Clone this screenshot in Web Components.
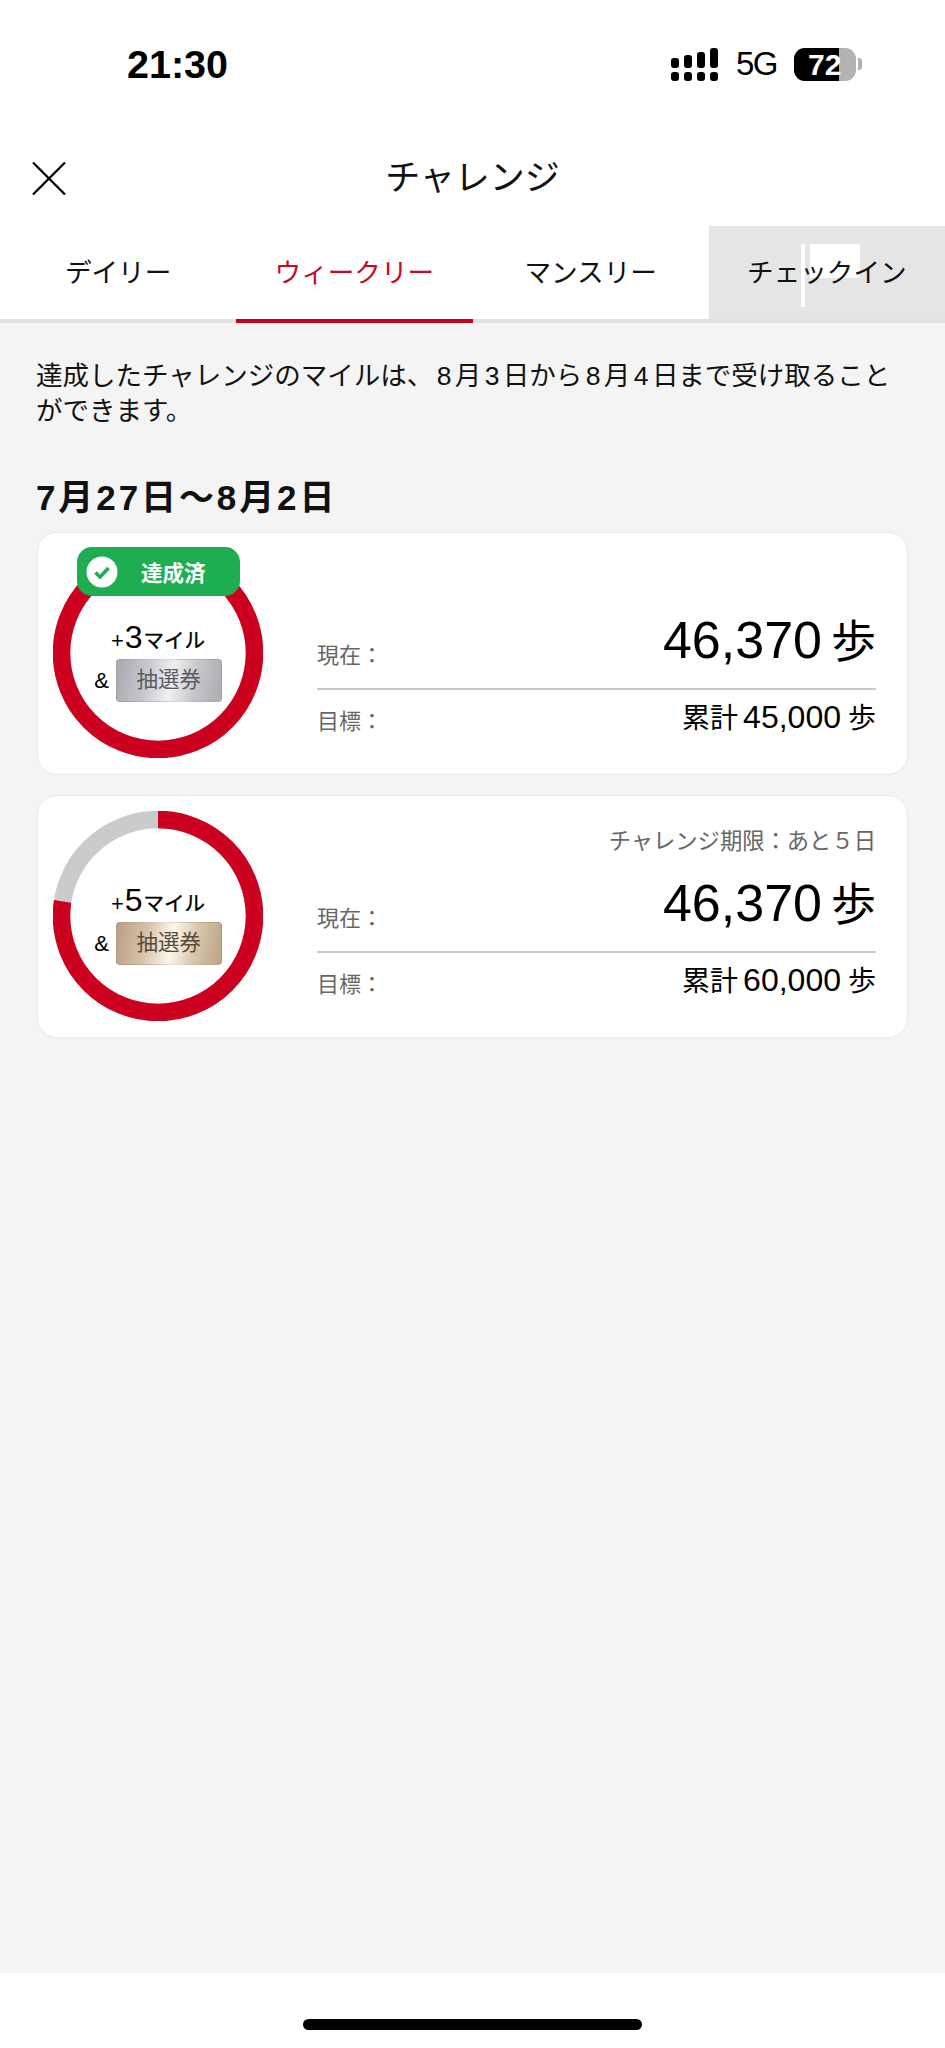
<!DOCTYPE html>
<html lang="ja">
<head>
<meta charset="utf-8">
<title>チャレンジ</title>
<style>
  html, body { margin: 0; padding: 0; background: #fff; }
  body { font-family: "Liberation Sans", "Noto Sans CJK JP", sans-serif; }
</style>
</head>
<body>
<challenge-app></challenge-app>

<script>
// status bar at the top of the phone
class StatusBar extends HTMLElement {
    constructor() {
        super();
        this.shadowDOM = this.attachShadow({mode: 'open'});
    }
    connectedCallback() {
        this.render();
    }
    render() {
        this.shadowDOM.innerHTML = `
            <style>
                :host { display: flex; height: 130px; box-sizing: border-box; padding: 42px 83px 0 127px; justify-content: space-between; align-items: flex-start; color: #000; }
                .time { font: bold 39.5px/44px "Liberation Sans", sans-serif; }
                .right { display: flex; align-items: center; height: 44px; }
                svg { display: block; }
                .net { font: 33px/44px "Liberation Sans", sans-serif; letter-spacing: -1.5px; margin: 0 17px 0 18px; }
                .batt { position: relative; width: 62px; height: 33px; border-radius: 11px; overflow: hidden; background: #b3b3b3; }
                .batt i { position: absolute; left: 0; top: 0; bottom: 0; width: 45px; background: #000; }
                .batt b { position: relative; display: block; font: bold 30px/33px "Liberation Sans", sans-serif; color: #fff; padding-left: 14px; }
                .nub { width: 4px; height: 12px; margin-left: 2px; border-radius: 0 3px 3px 0; background: #b3b3b3; }
            </style>
            <div class="time">21:30</div>
            <div class="right">
                <svg width="47" height="33" viewBox="0 0 47 33" fill="#000">
                    <rect x="0" y="10" width="8" height="10" rx="3"/><rect x="13" y="7" width="8" height="13" rx="3"/><rect x="26" y="4" width="8" height="16" rx="3"/><rect x="39" y="0" width="8" height="20" rx="3"/>
                    <rect x="0" y="24" width="8" height="9" rx="3"/><rect x="13" y="24" width="8" height="9" rx="3"/><rect x="26" y="24" width="8" height="9" rx="3"/><rect x="39" y="24" width="8" height="9" rx="3"/>
                </svg>
                <span class="net">5G</span>
                <div class="batt"><i></i><b>72</b></div>
                <div class="nub"></div>
            </div>`;
    }
}
customElements.define('status-bar', StatusBar);

// close button + title
class TitleBar extends HTMLElement {
    constructor() {
        super();
        this.shadowDOM = this.attachShadow({mode: 'open'});
    }
    connectedCallback() {
        this.render();
    }
    render() {
        this.shadowDOM.innerHTML = `
            <style>
                :host { display: block; position: relative; height: 96px; text-align: center; font: 35px/96px "Liberation Sans", "Noto Sans CJK JP", sans-serif; color: #111; }
                svg { position: absolute; left: 32px; top: 32px; }
            </style>
            <svg width="34" height="33" viewBox="0 0 34 33" fill="none" stroke="#000" stroke-width="2.2"><path d="M1 0.5 33 32.5M33 0.5 1 32.5"/></svg>
            <slot></slot>`;
    }
}
customElements.define('title-bar', TitleBar);

class TabBar extends HTMLElement {
    constructor() {
        super();
        this.shadowDOM = this.attachShadow({mode: 'open'});
    }
    connectedCallback() {
        this.render();
    }
    render() {
        this.shadowDOM.innerHTML = `
            <style>
                :host { display: grid; grid-template-columns: repeat(4, 1fr); height: 97px; background: #fff; }
            </style>
            <slot></slot>`;
    }
}
customElements.define('tab-bar', TabBar);

class TabItem extends HTMLElement {
    constructor() {
        super();
        this.shadowDOM = this.attachShadow({mode: 'open'});
    }
    connectedCallback() {
        this.render();
    }
    render() {
        this.shadowDOM.innerHTML = `
            <style>
                :host { display: block; position: relative; box-sizing: border-box; height: 97px; text-align: center; border-bottom: 4px solid #e2e2e2; font: 26.6px/95px "Liberation Sans", "Noto Sans CJK JP", sans-serif; color: #111; }
                :host([active]) { color: #c40a26; border-bottom-color: #c8001e; }
                :host([shaded]) { background: #e5e5e5; }
                span { position: relative; }
                .glitch { display: none; position: absolute; background: #fff; top: 18px; }
                :host([shaded]) .glitch { display: block; }
                .a { left: 92px; width: 4px; height: 63px; }
                .b { left: 101px; width: 50px; height: 34px; }
            </style>
            <div class="glitch a"></div><div class="glitch b"></div>
            <span><slot></slot></span>`;
    }
}
customElements.define('tab-item', TabItem);

// red progress ring with the reward in the middle
class ProgressRing extends HTMLElement {
    constructor() {
        super();
        this.shadowDOM = this.attachShadow({mode: 'open'});
    }
    connectedCallback() {
        this.render();
    }
    render() {
        const value = Number(this.getAttribute('value'));
        const r = 96.5;
        const c = 2 * Math.PI * r;
        const tier = this.getAttribute('tier');
        const bg = tier === 'gold'
            ? 'linear-gradient(100deg,#b99f84 0%,#d6c2a8 28%,#fbf6ea 52%,#d9c6ac 74%,#bda386 100%)'
            : 'linear-gradient(100deg,#a9a9b3 0%,#c6c6cd 28%,#f0f0f2 52%,#c6c6cc 74%,#abacb4 100%)';
        const ink = tier === 'gold' ? '#5a4a3a' : '#5b5b62';
        this.shadowDOM.innerHTML = `
            <style>
                :host { display: grid; width: 210px; height: 210px; flex: none; color: #000; }
                svg, .mid { grid-area: 1 / 1; }
                svg { display: block; }
                .mid { display: flex; flex-direction: column; align-items: center; padding-top: 72px; box-sizing: border-box; font-family: "Liberation Sans", "Noto Sans CJK JP", sans-serif; }
                .miles { font-size: 20.5px; line-height: 34px; height: 34px; -webkit-text-stroke: 0.35px #000; }
                .miles b { font-weight: 400; font-size: 32px; -webkit-text-stroke: 0; margin-right: 1px; }
                .miles em { font-style: normal; font-size: 22px; -webkit-text-stroke: 0; margin-right: 1px; }
                .line { display: flex; align-items: center; margin-top: 5px; font-size: 22px; }
                .ticket { width: 106px; height: 43px; margin-left: 7px; border-radius: 4px; box-sizing: border-box; border: 1px solid rgba(0,0,0,.08); background: ${bg}; color: ${ink}; font-size: 21.5px; line-height: 41px; text-align: center; }
            </style>
            <svg width="210" height="210" viewBox="0 0 210 210" fill="none" stroke-width="17.5">
                <circle cx="105" cy="105" r="${r}" stroke="#cbcbcb"/>
                <circle cx="105" cy="105" r="${r}" stroke="#cc001f" stroke-dasharray="${c * value} ${c}" transform="rotate(-90 105 105)"/>
            </svg>
            <div class="mid">
                <div class="miles"><em>+</em><b>${this.getAttribute('miles')}</b>マイル</div>
                <div class="line"><span>&amp;</span><div class="ticket">抽選券</div></div>
            </div>`;
    }
}
customElements.define('progress-ring', ProgressRing);

class ChallengeCard extends HTMLElement {
    constructor() {
        super();
        this.shadowDOM = this.attachShadow({mode: 'open'});
    }
    connectedCallback() {
        this.render();
    }
    render() {
        const done = this.hasAttribute('done');
        const note = this.getAttribute('note');
        this.shadowDOM.innerHTML = `
            <style>
                :host { display: flex; position: relative; box-sizing: border-box; height: 243px; padding: 15px 31px 0 15px; background: #fff; border: 1px solid #e9e9e9; border-radius: 20px; font-family: "Liberation Sans", "Noto Sans CJK JP", sans-serif; }
                .badge { position: absolute; left: 39px; top: 14px; display: flex; align-items: center; width: 163px; height: 49px; box-sizing: border-box; padding-left: 9px; background: #1eae51; border-radius: 15px; color: #fff; font-size: 21.5px; font-weight: 700; }
                .badge span { margin-left: 23px; }
                .data { flex: 1; margin-left: 54px; display: flex; flex-direction: column; }
                .note { height: 72px; font-size: 22.3px; line-height: 64px; text-align: right; color: #666; margin-top: -1px; white-space: nowrap; }
                .row { display: flex; justify-content: space-between; }
                .now { height: 71px; box-sizing: border-box; border-bottom: 2px solid #c9c9c9; align-items: flex-start; }
                .goal { margin-top: 7px; }
                .label { font-size: 22px; color: #666; line-height: 30px; }
                .now .label { margin-top: 22px; }
                .goal .label { margin-top: 10px; }
                .big { font-size: 52px; line-height: 60px; color: #000; margin-top: -9px; white-space: nowrap; }
                .big i, .sum i { font-style: normal; }
                .big i { font-size: 45px; margin-left: 9px; }
                .sum { font-size: 32px; line-height: 40px; color: #000; white-space: nowrap; }
                .sum u { text-decoration: none; font-size: 28px; margin-right: 5px; }
                .sum i { font-size: 28px; margin-left: 7px; }
            </style>
            ${done ? `<div class="badge">
                <svg width="32" height="32" viewBox="0 0 32 32"><circle cx="16" cy="16" r="15.5" fill="#fff"/><path d="M9.5 16.5 14 21 22.5 12" fill="none" stroke="#1eae51" stroke-width="3.6"/></svg>
                <span>達成済</span></div>` : ''}
            <progress-ring value="${this.getAttribute('value')}" miles="${this.getAttribute('miles')}" tier="${this.getAttribute('tier')}"></progress-ring>
            <div class="data">
                <div class="note">${note || ''}</div>
                <div class="row now"><div class="label">現在：</div><div class="big">46,370<i>歩</i></div></div>
                <div class="row goal"><div class="label">目標：</div><div class="sum"><u>累計</u>${this.getAttribute('goal')}<i>歩</i></div></div>
            </div>`;
    }
}
customElements.define('challenge-card', ChallengeCard);

class ChallengeApp extends HTMLElement {
    constructor() {
        super();
        this.shadowDOM = this.attachShadow({mode: 'open'});
    }
    connectedCallback() {
        this.render();
    }
    render() {
        this.shadowDOM.innerHTML = `
            <style>
                :host { display: flex; flex-direction: column; height: 2048px; background: #fff; font-family: "Liberation Sans", "Noto Sans CJK JP", sans-serif; }
                main { flex: 1; background: #f4f4f4; padding: 0 37px 0 36px; display: flex; flex-direction: column; }
                p { margin: 36px 0 0; font-size: 26.5px; line-height: 35px; color: #111; white-space: nowrap; }
                p span { margin: 0 3.4px; }
                h2 { margin: 47px 0 0; font-size: 35px; line-height: 44px; font-weight: 700; letter-spacing: 2.9px; color: #111; }
                challenge-card { margin-left: 1px; }
                .first { margin-top: 12px; }
                .second { margin-top: 20px; }
                footer { height: 75px; flex: none; display: flex; justify-content: center; background: #fff; }
                footer div { width: 339px; height: 11px; margin-top: 46px; border-radius: 6px; background: #000; }
            </style>
            <status-bar></status-bar>
            <title-bar>チャレンジ</title-bar>
            <tab-bar>
                <tab-item>デイリー</tab-item>
                <tab-item active>ウィークリー</tab-item>
                <tab-item>マンスリー</tab-item>
                <tab-item shaded>チェックイン</tab-item>
            </tab-bar>
            <main>
                <p>達成したチャレンジのマイルは、<span>8</span>月<span>3</span>日から<span>8</span>月<span>4</span>日まで受け取ること<br>ができます。</p>
                <h2>7月27日〜8月2日</h2>
                <challenge-card class="first" done value="1" miles="3" tier="silver" goal="45,000"></challenge-card>
                <challenge-card class="second" value="0.773" miles="5" tier="gold" goal="60,000" note="チャレンジ期限：あと５日"></challenge-card>
            </main>
            <footer><div></div></footer>`;
    }
}
customElements.define('challenge-app', ChallengeApp);
</script>
</body>
</html>
